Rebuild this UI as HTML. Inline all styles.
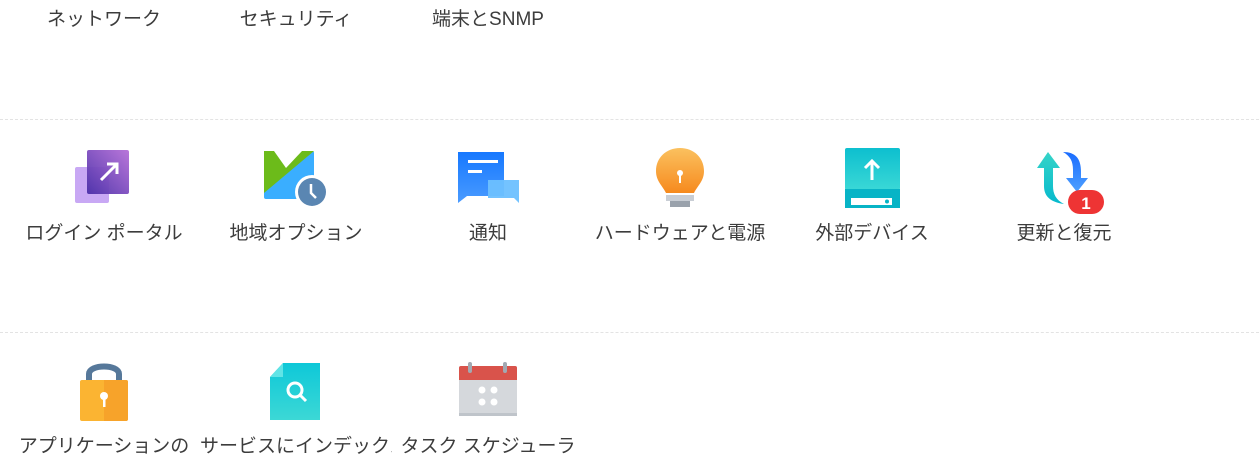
<!DOCTYPE html>
<html><head><meta charset="utf-8"><style>
body{margin:0;width:1259px;height:449px;overflow:hidden;background:#fff;font-family:"Liberation Sans","Noto Sans CJK JP",sans-serif;color:#3c3c3c;position:relative}
.t{position:absolute;width:192px;text-align:center;font-size:19px;line-height:24px;white-space:nowrap;overflow:hidden}
.hr{position:absolute;left:0;width:1259px;border-top:1px dashed #e3e3e3}
svg{position:absolute}
</style></head><body>
<div class="t" style="left:8px;top:8px">ネットワーク</div>
<div class="t" style="left:200px;top:8px">セキュリティ</div>
<div class="t" style="left:392px;top:8px">端末とSNMP</div>
<div class="hr" style="top:119px"></div>
<div class="hr" style="top:332px"></div>

<svg style="left:70px;top:145px" width="70" height="66" viewBox="0 0 70 66">
<defs><linearGradient id="p1" x1="1" y1="0" x2="0" y2="1"><stop offset="0" stop-color="#b56fd8"/><stop offset="1" stop-color="#4a2fa8"/></linearGradient></defs>
<rect x="5" y="22" width="34" height="36" rx="2" fill="#c8a8f4"/>
<rect x="17" y="5" width="42" height="44" rx="2" fill="url(#p1)" opacity=".95"/>
<path d="M31 35 L46 20 M37 19 H47 V29" stroke="#fff" stroke-width="3" fill="none"/>
</svg>
<div class="t" style="left:8px;top:222px">ログイン ポータル</div>

<svg style="left:262px;top:148px" width="70" height="64" viewBox="0 0 70 64">
<rect x="2" y="3" width="50" height="48" rx="2" fill="#3aaeff"/>
<path d="M2 3 H52 L2 45 Z" fill="#6cbb1a"/>
<path d="M12 3 L24 20 L40 3 Z" fill="#fff"/>
<circle cx="50" cy="44" r="17" fill="#fff"/>
<circle cx="50" cy="44" r="14" fill="#5a86b2"/>
<path d="M49 36 V45 L54 50" stroke="#fff" stroke-width="2.5" fill="none"/>
</svg>
<div class="t" style="left:200px;top:222px">地域オプション</div>

<svg style="left:455px;top:148px" width="66" height="62" viewBox="0 0 66 62">
<defs><linearGradient id="b1" x1="0" y1="0" x2="0" y2="1"><stop offset="0" stop-color="#1678ff"/><stop offset="1" stop-color="#4a9bff"/></linearGradient></defs>
<path d="M3 4 H49 V48 H12 L3 55 Z" fill="url(#b1)"/>
<rect x="13" y="12" width="30" height="3" fill="#fff"/><rect x="13" y="22" width="14" height="3" fill="#fff"/>
<path d="M33 32 H64 V55 L59 50 H33 Z" fill="#6dc0ff" opacity=".95"/>
</svg>
<div class="t" style="left:392px;top:222px">通知</div>

<svg style="left:650px;top:145px" width="60" height="66" viewBox="0 0 60 66">
<defs><linearGradient id="o1" x1="0" y1="0" x2="0" y2="1"><stop offset="0" stop-color="#fbc15f"/><stop offset="1" stop-color="#f68a1e"/></linearGradient></defs>
<path d="M30 3 C16 3 6 13 6 26 C6 36 12 40 16 48 H44 C48 40 54 36 54 26 C54 13 44 3 30 3Z" fill="url(#o1)"/>
<rect x="16" y="50" width="28" height="6" fill="#c9ced5"/><rect x="20" y="56" width="20" height="6" fill="#9aa2ac"/>
<circle cx="30" cy="28" r="3" fill="#fff"/><rect x="29" y="28" width="2" height="10" fill="#fff"/>
</svg>
<div class="t" style="left:584px;top:222px">ハードウェアと電源</div>

<svg style="left:843px;top:146px" width="60" height="62" viewBox="0 0 60 62">
<defs><linearGradient id="c1" x1="0" y1="0" x2="0" y2="1"><stop offset="0" stop-color="#0dbfcf"/><stop offset="1" stop-color="#3ad8d6"/></linearGradient></defs>
<rect x="2" y="2" width="55" height="42" rx="2" fill="url(#c1)"/>
<rect x="2" y="43" width="55" height="19" fill="#07b4c6"/>
<rect x="8" y="52" width="41" height="7" fill="#fff"/><circle cx="44" cy="55.5" r="2" fill="#07b4c6"/>
<path d="M29 34 V15 M22 22 L29 15 L36 22" stroke="#fff" stroke-width="3" fill="none"/>
</svg>
<div class="t" style="left:776px;top:222px">外部デバイス</div>

<svg style="left:1030px;top:148px" width="80" height="70" viewBox="0 0 80 70">
<defs><linearGradient id="u1" x1="0" y1="0" x2="0" y2="1"><stop offset="0" stop-color="#1a6cff"/><stop offset="1" stop-color="#4ea0ff"/></linearGradient><linearGradient id="u2" x1="0" y1="0" x2="0" y2="1"><stop offset="0" stop-color="#35d4c8"/><stop offset="1" stop-color="#06b9cd"/></linearGradient></defs>
<path d="M33 4 C45 4 51 10 51 24 V30 H58 L47 44 L36 30 H43 V22 C43 13 40 8 33 4Z" fill="url(#u1)"/>
<path d="M18 4 L7 20 H14 V38 C14 48 20 54 34 56 C26 52 23 46 23 38 V20 H30 Z" fill="url(#u2)"/>
<rect x="38" y="42" width="36" height="24" rx="12" fill="#ee3434"/>
<text x="56" y="61" font-size="17" font-weight="bold" fill="#fff" text-anchor="middle" font-family="Liberation Sans">1</text>
</svg>
<div class="t" style="left:968px;top:222px">更新と復元</div>

<svg style="left:74px;top:360px" width="60" height="64" viewBox="0 0 60 64">
<path d="M15 22 V14 C15 4 45 4 45 14 V22" stroke="#56789a" stroke-width="6" fill="none"/>
<rect x="6" y="20" width="48" height="41" rx="2" fill="#fbb432"/>
<path d="M30 20 H52 A2 2 0 0 1 54 22 V59 A2 2 0 0 1 52 61 H30Z" fill="#f7a32a"/>
<circle cx="30" cy="36" r="4" fill="#fff"/><rect x="29" y="36" width="2.5" height="11" fill="#fff"/>
</svg>
<div class="t" style="left:8px;top:435px">アプリケーションの</div>

<svg style="left:266px;top:360px" width="60" height="64" viewBox="0 0 60 64">
<defs><linearGradient id="c2" x1="0" y1="0" x2="0" y2="1"><stop offset="0" stop-color="#0ec8d8"/><stop offset="1" stop-color="#3cd8d6"/></linearGradient></defs>
<path d="M17 3 H54 V60 H4 V17 Z" fill="url(#c2)"/>
<path d="M17 3 V17 H4 Z" fill="#60e4e6"/>
<circle cx="29" cy="30" r="7" stroke="#fff" stroke-width="3" fill="none"/>
<path d="M34 35 L40 41" stroke="#fff" stroke-width="3"/>
</svg>
<div class="t" style="left:200px;top:435px">サービスにインデックス</div>

<svg style="left:456px;top:360px" width="64" height="60" viewBox="0 0 64 60">
<rect x="3" y="6" width="58" height="50" rx="2" fill="#d5d8dc"/>
<path d="M3 8 A2 2 0 0 1 5 6 H59 A2 2 0 0 1 61 8 V20 H3Z" fill="#d9534b"/>
<rect x="3" y="53" width="58" height="3" fill="#bfc4ca"/>
<rect x="12" y="2" width="4" height="11" rx="2" fill="#a2a9b2"/><rect x="47" y="2" width="4" height="11" rx="2" fill="#a2a9b2"/>
<circle cx="26" cy="30" r="3.5" fill="#fff"/><circle cx="38" cy="30" r="3.5" fill="#fff"/><circle cx="26" cy="42" r="3.5" fill="#fff"/><circle cx="38" cy="42" r="3.5" fill="#fff"/>
</svg>
<div class="t" style="left:392px;top:435px">タスク スケジューラ</div>
</body></html>
